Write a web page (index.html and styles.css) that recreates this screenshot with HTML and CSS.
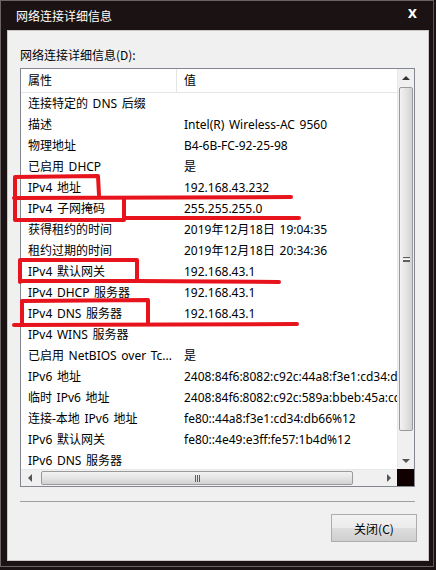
FILE: index.html
```html
<!DOCTYPE html>
<html lang="zh-CN">
<head>
<meta charset="utf-8">
<title>网络连接详细信息</title>
<link rel="stylesheet" href="styles.css">
</head>
<body>
<div class="window">
  <div class="titlebar">
    <span class="title">网络连接详细信息</span>
    <span class="close">X</span>
  </div>
  <div class="client">
    <div class="label">网络连接详细信息(D):</div>
    <div class="listbox">
      <div class="viewport">
        <div class="header">
          <div class="hcell c1">属性</div>
          <div class="hcell c2">值</div>
        </div>
        <div class="row"><span class="c1">连接特定的 DNS 后缀</span><span class="c2"></span></div>
        <div class="row"><span class="c1">描述</span><span class="c2">Intel(R) Wireless-AC 9560</span></div>
        <div class="row"><span class="c1">物理地址</span><span class="c2">B4-6B-FC-92-25-98</span></div>
        <div class="row"><span class="c1">已启用 DHCP</span><span class="c2">是</span></div>
        <div class="row"><span class="c1">IPv4 地址</span><span class="c2">192.168.43.232</span></div>
        <div class="row"><span class="c1">IPv4 子网掩码</span><span class="c2">255.255.255.0</span></div>
        <div class="row"><span class="c1">获得租约的时间</span><span class="c2">2019年12月18日 19:04:35</span></div>
        <div class="row"><span class="c1">租约过期的时间</span><span class="c2">2019年12月18日 20:34:36</span></div>
        <div class="row"><span class="c1">IPv4 默认网关</span><span class="c2">192.168.43.1</span></div>
        <div class="row"><span class="c1">IPv4 DHCP 服务器</span><span class="c2">192.168.43.1</span></div>
        <div class="row"><span class="c1">IPv4 DNS 服务器</span><span class="c2">192.168.43.1</span></div>
        <div class="row"><span class="c1">IPv4 WINS 服务器</span><span class="c2"></span></div>
        <div class="row"><span class="c1">已启用 NetBIOS over Tc...</span><span class="c2">是</span></div>
        <div class="row"><span class="c1">IPv6 地址</span><span class="c2">2408:84f6:8082:c92c:44a8:f3e1:cd34:db66</span></div>
        <div class="row"><span class="c1">临时 IPv6 地址</span><span class="c2">2408:84f6:8082:c92c:589a:bbeb:45a:cd12</span></div>
        <div class="row"><span class="c1">连接-本地 IPv6 地址</span><span class="c2">fe80::44a8:f3e1:cd34:db66%12</span></div>
        <div class="row"><span class="c1">IPv6 默认网关</span><span class="c2">fe80::4e49:e3ff:fe57:1b4d%12</span></div>
        <div class="row"><span class="c1">IPv6 DNS 服务器</span><span class="c2"></span></div>
      </div>
      <div class="vscroll">
        <div class="sbtn"><span class="tri-up"></span></div>
        <div class="vtrack">
          <div class="vthumb"><span class="vgrip"></span></div>
        </div>
        <div class="sbtn"><span class="tri-down"></span></div>
      </div>
      <div class="hscroll">
        <div class="hbtn"><span class="tri-left"></span></div>
        <div class="htrack">
          <div class="hthumb"><span class="hgrip"></span></div>
        </div>
        <div class="hbtn"><span class="tri-right"></span></div>
      </div>
      <div class="corner"></div>
    </div>
    <div class="sep"></div>
    <div class="footer">
      <button class="btn" type="button">关闭(C)</button>
    </div>
  </div>
  <svg class="annot" width="436" height="570" viewBox="0 0 436 570">
    <g fill="none" stroke="#e8141d" stroke-width="4" stroke-linecap="round" stroke-linejoin="round">
      <path d="M15 198 L15 177 L98 176 L99 195"/>
      <path d="M14 198 L291 197"/>
      <path d="M15 199 L15 220 L124 220 L124 199"/>
      <path d="M124 218 L299 218"/>
      <path d="M20 282 L20 260 L137 260 L137 281 L20 281"/>
      <path d="M137 281 L279 282"/>
      <path d="M22 323 L22 301 L148 300 L148 323"/>
      <path d="M14 325 L297 324"/>
    </g>
  </svg>
</div>
</body>
</html>
```

FILE: styles.css
```css
* { box-sizing: border-box; }
html, body {
  margin: 0;
  padding: 0;
  background: #1b1313;
}
body {
  width: 436px;
  height: 570px;
  overflow: hidden;
  font-family: "Noto Sans", "Noto Sans CJK SC", sans-serif;
  font-size: 12px;
}
.window {
  position: relative;
  width: 434px;
  height: 567px;
  border: 1px solid #6a6464;
  border-right-color: #5a5454;
  background: #1b1313;
  display: flex;
  flex-direction: column;
}
.titlebar {
  height: 29px;
  display: flex;
  align-items: center;
  justify-content: space-between;
  padding: 0 15px 0 15px;
  color: #fff;
}
.title {
  font-family: "Noto Sans CJK SC", sans-serif;
  font-size: 12px;
  line-height: 16px;
  margin-top: 1px;
}
.close {
  font-family: "DejaVu Sans", sans-serif;
  font-weight: bold;
  font-size: 12px;
  line-height: 12px;
  margin-top: -3px;
  margin-right: 1px;
}
.client {
  margin-left: 6px;
  width: 422px;
  height: 531px;
  background: #f0f0f0;
  border: 1px solid #c9c6c6;
  padding: 16px 13px 0 12px;
  display: flex;
  flex-direction: column;
}
.label {
  font-family: "Noto Sans CJK SC", sans-serif;
  height: 16px;
  line-height: 16px;
  color: #000;
  margin-bottom: 5px;
}
.listbox {
  width: 395px;
  height: 419px;
  border: 1px solid #828790;
  background: #fff;
  display: grid;
  grid-template-columns: 376px 17px;
  grid-template-rows: 400px 17px;
}
.viewport {
  overflow: hidden;
  background: #fff;
}
.header {
  display: flex;
  height: 24px;
  border-bottom: 1px solid #e5e5e5;
  background: #fff;
}
.hcell {
  line-height: 22px;
  padding-left: 7px;
  color: #000;
  font-family: "Noto Sans CJK SC", sans-serif;
}
.hcell.c1 {
  width: 156px;
  border-right: 1px solid #e5e5e5;
}
.row {
  display: flex;
  height: 21px;
  line-height: 21px;
  white-space: nowrap;
  color: #000;
  word-spacing: 1.5px;
}
.row .c1 {
  width: 156px;
  flex: none;
  padding-left: 7px;
}
.row .c2 {
  padding-left: 7px;
  flex: none;
}
.vscroll {
  display: flex;
  flex-direction: column;
  background: #f0f0f0;
  border-left: 1px solid #e8e8e8;
}
.sbtn {
  height: 17px;
  display: flex;
  align-items: center;
  justify-content: center;
}
.vtrack {
  flex: 1;
  padding: 1px 1px 21px 1px;
  display: flex;
}
.vthumb {
  flex: 1;
  border: 1px solid #9a9a9a;
  border-radius: 2px;
  background: linear-gradient(to right, #f3f3f3, #e4e4e4 50%, #d2d2d2);
  display: flex;
  align-items: center;
  justify-content: center;
}
.vgrip {
  width: 7px;
  height: 5px;
  border-top: 1px solid #5e5e5e;
  border-bottom: 1px solid #5e5e5e;
  background: linear-gradient(#fff 0 1px, #5e5e5e 1px 2px, transparent 2px);
  background-position: 0 1px;
  background-repeat: no-repeat;
}
.hscroll {
  display: flex;
  background: #f0f0f0;
  border-top: 1px solid #e8e8e8;
}
.hbtn {
  width: 17px;
  display: flex;
  align-items: center;
  justify-content: center;
}
.htrack {
  flex: 1;
  padding: 1px 27px 1px 3px;
  display: flex;
}
.hthumb {
  flex: 1;
  border: 1px solid #9a9a9a;
  border-radius: 2px;
  background: linear-gradient(to bottom, #f3f3f3, #e4e4e4 50%, #d2d2d2);
  display: flex;
  align-items: center;
  justify-content: center;
}
.hgrip {
  width: 5px;
  height: 7px;
  border-left: 1px solid #5e5e5e;
  border-right: 1px solid #5e5e5e;
  background: linear-gradient(to right, transparent 1px, #5e5e5e 1px 2px, transparent 2px);
}
.corner {
  background: #100000;
}
.tri-up, .tri-down, .tri-left, .tri-right {
  width: 0;
  height: 0;
  display: block;
}
.tri-up {
  border-left: 4px solid transparent;
  border-right: 4px solid transparent;
  border-bottom: 4px solid #333;
}
.tri-down {
  border-left: 4px solid transparent;
  border-right: 4px solid transparent;
  border-top: 4px solid #555;
}
.tri-left {
  border-top: 4px solid transparent;
  border-bottom: 4px solid transparent;
  border-right: 4px solid #555;
}
.tri-right {
  border-top: 4px solid transparent;
  border-bottom: 4px solid transparent;
  border-left: 4px solid #555;
}
.sep {
  margin-top: 14px;
  width: 395px;
  height: 1px;
  background: #a0a0a0;
  border-bottom: 0;
}
.footer {
  display: flex;
  justify-content: flex-end;
  margin-top: 12px;
  margin-right: -2px;
}
.btn {
  width: 86px;
  height: 28px;
  border: 1px solid #adadad;
  background: linear-gradient(#f2f2f2, #ebebeb 50%, #dddddd 51%, #cfcfcf);
  font-family: "Noto Sans CJK SC", sans-serif;
  font-size: 12px;
  color: #000;
  padding: 0;
}
.annot {
  position: absolute;
  left: -1px;
  top: -1px;
  pointer-events: none;
}
```
